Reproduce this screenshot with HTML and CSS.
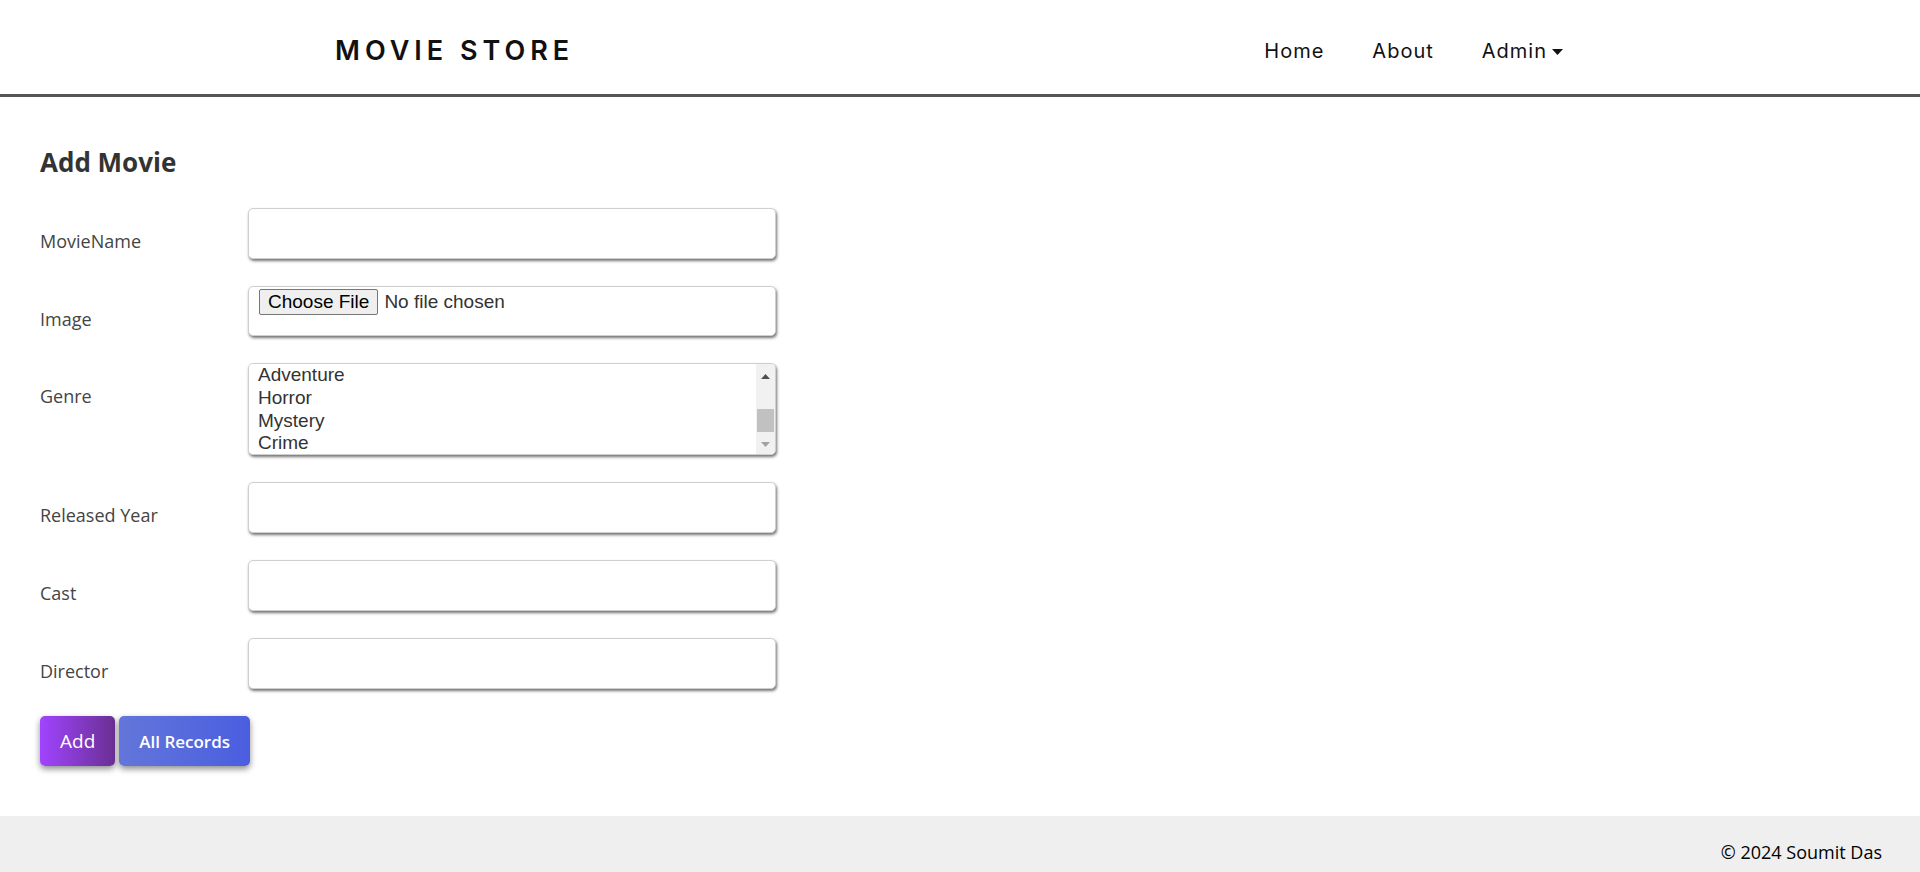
FILE: index.html
```html
<!DOCTYPE html>
<html lang="en">
<head>
<meta charset="utf-8">
<title>Movie Store - Add Movie</title>
<link rel="stylesheet" href="styles.css">
</head>
<body>
<header class="site-header">
  <div class="header-inner">
    <a class="brand" href="#">MOVIE STORE</a>
    <nav class="nav">
      <a class="nav-link" href="#">Home</a>
      <a class="nav-link" href="#">About</a>
      <a class="nav-link dropdown" href="#">Admin<svg class="caret" width="11" height="6" viewBox="0 0 11 6"><path d="M0 0 H11 L5.5 6 Z" fill="#111"/></svg></a>
    </nav>
  </div>
</header>

<main class="content">
  <h2 class="page-title">Add Movie</h2>
  <form class="movie-form">
    <div class="form-row">
      <label class="form-label">MovieName</label>
      <input class="field" type="text">
    </div>
    <div class="form-row">
      <label class="form-label">Image</label>
      <input class="field field-file" type="file">
    </div>
    <div class="form-row">
      <label class="form-label">Genre</label>
      <div class="listbox">
        <select class="genre" multiple>
          <option>Action</option>
          <option>Comedy</option>
          <option>Drama</option>
          <option>Thriller</option>
          <option>Romance</option>
          <option>Adventure</option>
          <option>Horror</option>
          <option>Mystery</option>
          <option>Crime</option>
          <option>Fantasy</option>
        </select>
        <div class="fake-scrollbar" aria-hidden="true">
          <span class="sb-btn"><svg width="9" height="5" viewBox="0 0 9 5"><path d="M0 5 L4.5 0 L9 5 Z" fill="#505050"/></svg></span>
          <span class="sb-track"><span class="sb-thumb"></span></span>
          <span class="sb-btn"><svg width="9" height="5" viewBox="0 0 9 5"><path d="M0 0 L9 0 L4.5 5 Z" fill="#a3a3a3"/></svg></span>
        </div>
      </div>
    </div>
    <div class="form-row">
      <label class="form-label">Released Year</label>
      <input class="field" type="text">
    </div>
    <div class="form-row">
      <label class="form-label">Cast</label>
      <input class="field" type="text">
    </div>
    <div class="form-row">
      <label class="form-label">Director</label>
      <input class="field" type="text">
    </div>
    <div class="actions">
      <button class="btn btn-add" type="button">Add</button>
      <button class="btn btn-records" type="button">All Records</button>
    </div>
  </form>
</main>

<footer class="site-footer">© 2024 Soumit Das</footer>
<script src="script.js"></script>
</body>
</html>
```

FILE: styles.css
```css
html, body {
  height: 100%;
}

body {
  margin: 0;
  min-height: 100vh;
  display: flex;
  flex-direction: column;
  font-family: "Open Sans", "Noto Sans", sans-serif;
  background: #fff;
}

.site-header {
  height: 97px;
  box-sizing: border-box;
  border-bottom: 3px solid #555;
  background: #fff;
  flex: none;
}

.header-inner {
  width: 1250px;
  height: 94px;
  margin: 0 auto;
  padding-top: 6px;
  box-sizing: border-box;
  display: flex;
  align-items: center;
  justify-content: space-between;
}

.brand {
  font-family: "Inter", sans-serif;
  font-weight: 600;
  font-size: 27px;
  letter-spacing: 5px;
  color: #111;
  text-decoration: none;
}

.nav {
  display: flex;
  align-items: center;
  padding-top: 2px;
}

.nav-link {
  font-family: "Inter", sans-serif;
  font-size: 20px;
  letter-spacing: 1px;
  color: #111;
  text-decoration: none;
  padding: 0 24px;
  display: flex;
  align-items: center;
}

.nav-link:last-child {
  padding-right: 22px;
}

.caret {
  margin-left: 5px;
  margin-top: 1px;
}

.content {
  flex: 1;
  padding: 0 40px;
}

.page-title {
  margin: 47px 0 28px;
  font-size: 26px;
  font-weight: 700;
  line-height: 36px;
  color: #333;
}

.movie-form {
  margin: 0;
}

.form-row {
  display: flex;
  align-items: flex-start;
  margin-bottom: 27px;
}

.form-label {
  width: 208px;
  flex: none;
  padding-top: 21px;
  font-size: 18px;
  line-height: 25px;
  color: #444;
}

.field {
  width: 528px;
  height: 51px;
  box-sizing: border-box;
  margin: 0;
  border: 1px solid #cfcfcf;
  border-radius: 5px;
  box-shadow: 1px 2px 3px rgba(0, 0, 0, 0.55);
  padding: 0 8px;
  font-family: "Liberation Sans", Arial, sans-serif;
  font-size: 19px;
  color: #333;
  background: #fff;
  outline: none;
}

.field-file {
  height: 50px;
  padding: 1px 10px;
}

.field-file::file-selector-button {
  font-family: "Liberation Sans", Arial, sans-serif;
  font-size: 19px;
  color: #000;
  background: #efefef;
  border: 1px solid #767676;
  border-radius: 2px;
  padding: 0 8px;
  height: 26px;
  margin: 1px 6px 0 0;
}

.listbox {
  width: 528px;
  height: 92px;
  box-sizing: border-box;
  border: 1px solid #cfcfcf;
  border-radius: 5px;
  box-shadow: 1px 2px 3px rgba(0, 0, 0, 0.55);
  background: #fff;
  display: flex;
  overflow: hidden;
}

.genre {
  flex: 1;
  min-width: 0;
  height: 90px;
  margin: 0;
  border: none;
  padding: 0 0 0 7px;
  font-family: "Liberation Sans", Arial, sans-serif;
  font-size: 19px;
  color: #333;
  background: #fff;
  outline: none;
  overflow-y: scroll;
  scrollbar-width: none;
}

.genre::-webkit-scrollbar {
  display: none;
}

.genre option {
  color: #333;
  padding: 0 2px;
}

.fake-scrollbar {
  width: 19px;
  flex: none;
  background: #f1f1f1;
  display: flex;
  flex-direction: column;
}

.sb-btn {
  height: 25px;
  display: flex;
  align-items: center;
  justify-content: center;
  flex: none;
}

.sb-track {
  flex: 1;
  padding: 0 1px;
}

.sb-thumb {
  display: block;
  height: 23px;
  margin-top: 20px;
  background: #c1c1c1;
}

.actions {
  display: flex;
  gap: 4px;
}

.btn {
  height: 50px;
  padding: 0 20px;
  border: none;
  border-radius: 5px;
  color: #fff;
  font-family: "Open Sans", sans-serif;
  box-shadow: 0 3px 6px rgba(0, 0, 0, 0.45);
  cursor: pointer;
}

.btn-add {
  font-size: 19px;
  font-weight: 400;
  background: linear-gradient(to right, #a044ff, #6a3093);
}

.btn-records {
  font-size: 17px;
  font-weight: 600;
  background: linear-gradient(to right, #6376da, #4a5ee0);
}

.site-footer {
  flex: none;
  height: 56px;
  box-sizing: border-box;
  padding: 23px 38px 0;
  background: #efefef;
  text-align: right;
  font-size: 18px;
  line-height: 26px;
  color: #000;
}
```

FILE: script.js
```js
window.addEventListener('load', function () {
  var s = document.querySelector('.genre');
  if (s && s.options.length) {
    s.scrollTop = Math.round(s.scrollHeight * 5 / s.options.length);
  }
});
```
